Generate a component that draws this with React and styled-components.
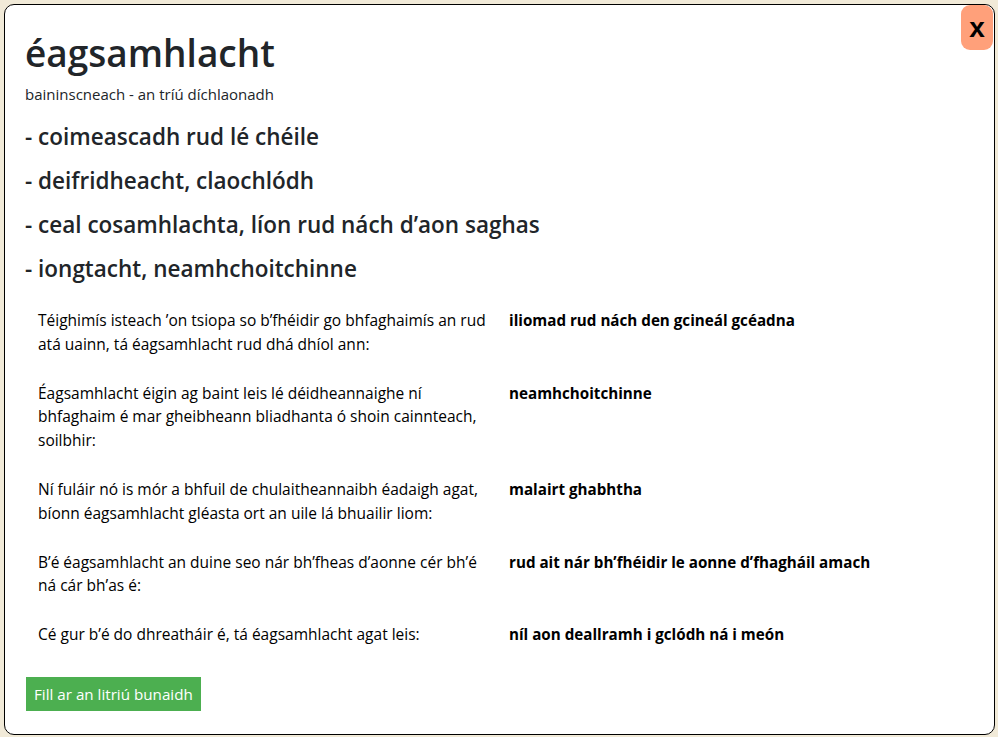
import styled, { createGlobalStyle } from "styled-components"

const GlobalStyle = createGlobalStyle`
  html, body {
    margin: 0;
    padding: 0;
    background: #f1ead8;
  }
  body {
    padding: 4px 3px 2px 4px;
    font-family: "Open Sans", "Noto Sans", sans-serif;
    color: #212529;
  }
`

const rows = [
  {
    text: "Téighimís isteach ’on tsiopa so b’fhéidir go bhfaghaimís an rud atá uainn, tá éagsamhlacht rud dhá dhíol ann:",
    gloss: "iliomad rud nách den gcineál gcéadna",
  },
  {
    text: "Éagsamhlacht éigin ag baint leis lé déidheannaighe ní bhfaghaim é mar gheibheann bliadhanta ó shoin cainnteach, soilbhir:",
    gloss: "neamhchoitchinne",
  },
  {
    text: "Ní fuláir nó is mór a bhfuil de chulaitheannaibh éadaigh agat, bíonn éagsamhlacht gléasta ort an uile lá bhuailir liom:",
    gloss: "malairt ghabhtha",
  },
  {
    text: "B’é éagsamhlacht an duine seo nár bh’fheas d’aonne cér bh’é ná cár bh’as é:",
    gloss: "rud ait nár bh’fhéidir le aonne d’fhagháil amach",
  },
  {
    text: "Cé gur b’é do dhreatháir é, tá éagsamhlacht agat leis:",
    gloss: "níl aon deallramh i gclódh ná i meón",
  },
]

const senses = [
  "- coimeascadh rud lé chéile",
  "- deifridheacht, claochlódh",
  "- ceal cosamhlachta, líon rud nách d’aon saghas",
  "- iongtacht, neamhchoitchinne",
]

const App = () => {
  return (
    <>
      <GlobalStyle />
      <Modal>
        <CloseButton>x</CloseButton>
        <Title>éagsamhlacht</Title>
        <Grammar>baininscneach - an tríú díchlaonadh</Grammar>
        {senses.map((s) => (
          <Sense key={s}>{s}</Sense>
        ))}
        <Examples>
          {rows.map((r) => (
            <Row key={r.gloss}>
              <Example>{r.text}</Example>
              <Gloss>{r.gloss}</Gloss>
            </Row>
          ))}
        </Examples>
        <BackButton>Fill ar an litriú bunaidh</BackButton>
      </Modal>
    </>
  )
}

export default App

const Modal = styled.div`
  position: relative;
  box-sizing: border-box;
  height: 731px;
  background: #fff;
  border: 1px solid #000;
  border-radius: 10px;
  padding: 19px 20px 0 20px;
`

const CloseButton = styled.button`
  position: absolute;
  top: 0;
  right: 1px;
  width: 32px;
  height: 45px;
  border: none;
  border-radius: 9px;
  background: #ffa07a;
  color: #000;
  font-family: "Liberation Sans", Arial, sans-serif;
  font-weight: 700;
  font-size: 28px;
  line-height: 45px;
  padding: 0;
  cursor: pointer;
`

const Title = styled.h1`
  margin: 0;
  font-size: 37px;
  font-weight: 600;
  line-height: 57px;
`

const Grammar = styled.div`
  font-size: 15px;
  line-height: 22px;
  margin: 2px 0 10px;
`

const Sense = styled.h3`
  margin: 0;
  font-size: 22.5px;
  font-weight: 600;
  line-height: 44px;
`

const Examples = styled.div`
  margin-top: 5px;
  display: grid;
  grid-template-columns: 472px 1fr;
`

const Row = styled.div`
  display: contents;
`

const Example = styled.div`
  padding: 13px 7px 12.5px 13px;
  font-size: 15.5px;
  line-height: 23.6px;
  color: #000;
`

const Gloss = styled.div`
  padding: 13px 12px 12.5px;
  font-size: 15.2px;
  line-height: 23.6px;
  font-weight: 700;
  color: #000;
`

const BackButton = styled.button`
  margin-top: 18px;
  margin-left: 1px;
  background: #4caf50;
  color: #fff;
  border: none;
  height: 34px;
  padding: 0 8px;
  font-family: inherit;
  font-size: 15.2px;
  cursor: pointer;
`
